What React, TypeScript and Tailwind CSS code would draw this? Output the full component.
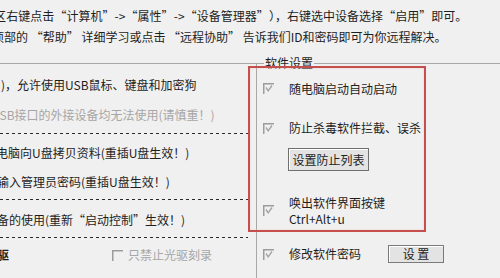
import React from "react";

const font = { fontFamily: '"Noto Sans CJK SC", "Microsoft YaHei", sans-serif' };

function Check({ checked = true }: { checked?: boolean }) {
  return (
    <svg width="11" height="11" viewBox="0 0 11 11" className="shrink-0">
      <path d="M0.75 11 V0.75 H11" fill="none" stroke="#9c9c9c" strokeWidth="1.5" />
      {checked && <path d="M3 4.5 L5.2 7.8 L9 2.5" fill="none" stroke="#a3a3a3" strokeWidth="1.4" />}
    </svg>
  );
}

function Dashed() {
  return <div className="h-px w-[248px] bg-[repeating-linear-gradient(90deg,#2a2a2a_0_3px,transparent_3px_6px)]" />;
}

export default function App() {
  return (
    <div
      className="relative w-[500px] h-[278px] overflow-hidden bg-[#f0f0f0] text-[12px] text-[#1e1e1e]"
      style={font}
    >
      <div className="pt-[5px] leading-[21px] whitespace-nowrap">
        <div className="-ml-[6px] [word-spacing:-2.5px]">区 右键点击 “计算机” -&gt; “属性” -&gt; “设备管理器” ），右键选中设备选择 “启用” 即可。</div>
        <div className="-ml-[8px]">项部的 “帮助” 详细学习或点击 “远程协助” 告诉我们ID和密码即可为你远程解决。</div>
      </div>
      <div className="mt-[16px] flex border-t border-[#a8a8a8] h-[300px]">
        <div className="w-[256px] shrink-0 whitespace-nowrap leading-[20px]">
          <div className="mt-[11px] h-[20px] ml-[1px]">)，允许使用USB鼠标、键盘和加密狗</div>
          <div className="mt-[10px] h-[20px] -ml-[9px] text-[#a6a6a6]">USB接口的外接设备均无法使用(请慎重！)</div>
          <div className="mt-[8px]"><Dashed /></div>
          <div className="mt-[9px] h-[20px] -ml-[4px]">电脑向U盘拷贝资料(重插U盘生效！)</div>
          <div className="mt-[9px] h-[20px] -ml-[3px]">输入管理员密码(重插U盘生效！)</div>
          <div className="mt-[7px]"><Dashed /></div>
          <div className="mt-[10px] h-[20px] -ml-[15px]">设备的使用(重新“启动控制”生效！)</div>
          <div className="mt-[7px]"><Dashed /></div>
          <div className="mt-[7px] h-[20px] flex items-center">
            <span className="-ml-[3px] font-bold">驱</span>
            <span className="ml-[103px] flex items-center gap-[5px] text-[#a6a6a6]">
              <Check checked={false} />
              只禁止光驱刻录
            </span>
          </div>
        </div>
        <div className="flex-1 border-l border-[#a8a8a8] pl-[6px] leading-[20px] whitespace-nowrap">
          <div className="-mt-[11px] ml-[1px] w-fit px-[1px] bg-[#f0f0f0] h-[20px]">软件设置</div>
          <div className="mt-[5px] h-[20px] flex items-center gap-[15px]">
            <Check />
            <span className="pt-[2px]">随电脑启动自动启动</span>
          </div>
          <div className="mt-[20px] h-[20px] flex items-center gap-[15px]">
            <Check />
            <span>防止杀毒软件拦截、误杀</span>
          </div>
          <button className="mt-[10px] ml-[25px] w-[81px] h-[23px] border border-[#6f6f6f] bg-[#e3e3e3] shadow-[inset_1px_1px_0_#ffffff] text-[12px] text-[#1e1e1e] leading-[20px]">
            设置防止列表
          </button>
          <div className="mt-[22px] flex items-center gap-[15px]">
            <Check />
            <div className="leading-[16px] pt-[2px]">
              <div>唤出软件界面按键</div>
              <div>Ctrl+Alt+u</div>
            </div>
          </div>
          <div className="mt-[17px] h-[20px] flex items-center gap-[15px]">
            <Check />
            <span>修改软件密码</span>
            <button className="ml-[12px] w-[56px] h-[18px] border border-[#7a7a7a] bg-[#e3e3e3] shadow-[inset_1px_1px_0_#ffffff] text-[12px] leading-[16px] text-[#1e1e1e]">
              设 置
            </button>
          </div>
        </div>
      </div>
      <div className="absolute left-[248px] top-[66px] w-[178px] h-[166px] border-2 border-[#c44f4d] shadow-[inset_0_0_2px_#f3c8c8] pointer-events-none" />
    </div>
  );
}
